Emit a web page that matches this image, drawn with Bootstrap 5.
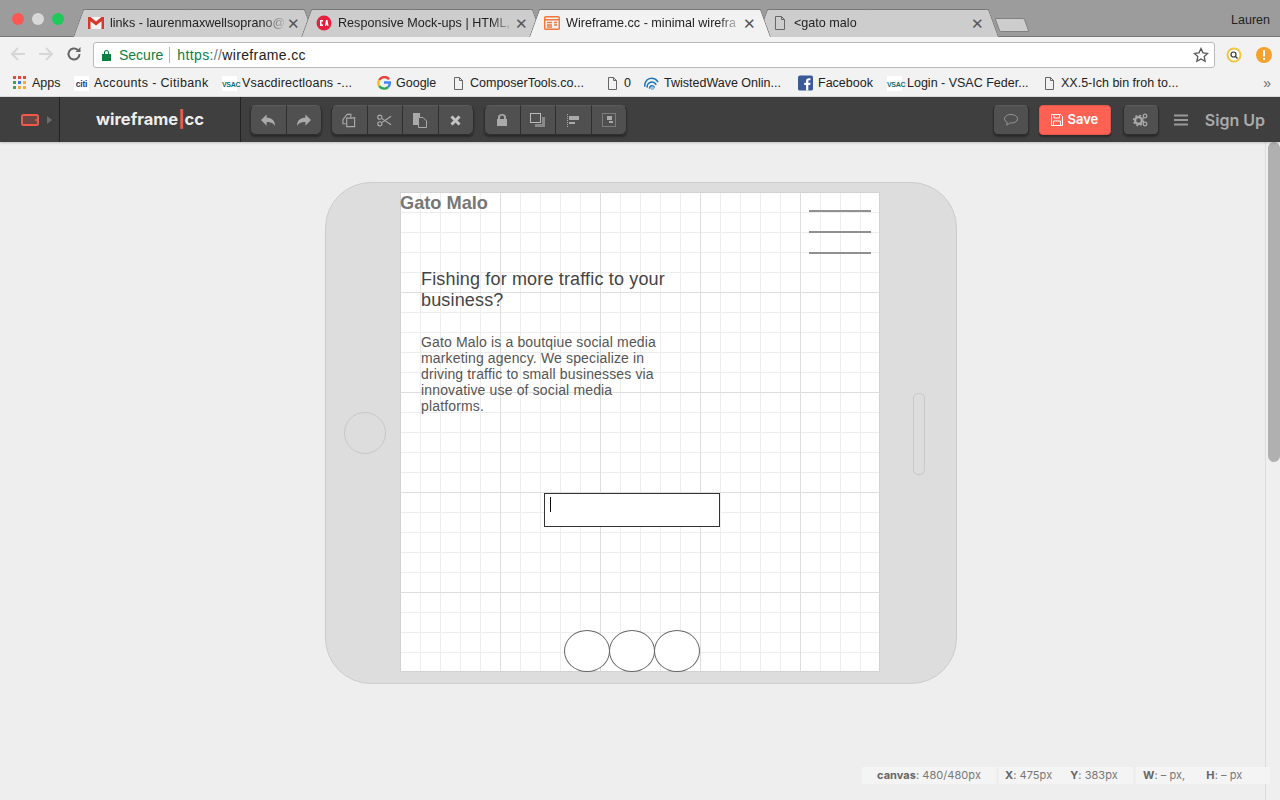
<!DOCTYPE html>
<html lang="en">
<head>
  <meta charset="UTF-8">
  <title>Wireframe.cc - minimal wireframing tool</title>
  <meta name="viewport" content="width=device-width, initial-scale=1.0">
  <link href="https://cdn.jsdelivr.net/npm/bootstrap@5.3.0/dist/css/bootstrap.min.css" rel="stylesheet">
  <style>
    html, body { height: 800px; overflow: hidden; }
    body { font-family: "Liberation Sans", Arial, sans-serif; background: #eee; color: #222; }

    /* browser chrome */
    .tabstrip { height: 37px; padding-left: 73px; background: #9c9c9c; border-bottom: 1px solid #777; }
    .lights { position: absolute; left: 12px; top: 13px; }
    .lights i { width: 12px; height: 12px; border-radius: 50%; display: block; }
    .light-red { background: #fc5753; }
    .light-off { background: #d8d8d8; }
    .light-green { background: #1fc95a; }
    .tab-item { position: relative; width: 241px; height: 28px; margin-right: -13px; margin-bottom: -1px; font-size: 12.6px; color: #222; padding: 0 15px 0 15px; }
    .tab-item::before, .tab-item::after { content: ""; position: absolute; top: 0; bottom: 0; background: #cdcdcd; border-top: 1px solid #777; z-index: 0; }
    .tab-item::before { left: 0; right: 50%; transform: skewX(-20deg); transform-origin: bottom left; border-left: 1px solid #777; border-radius: 2px 0 0 0; }
    .tab-item::after { right: 0; left: 50%; transform: skewX(20deg); transform-origin: bottom right; border-right: 1px solid #777; border-radius: 0 2px 0 0; }
    .tab-item > * { position: relative; z-index: 1; }
    .tab-on { z-index: 3; }
    .tab-on::before, .tab-on::after { background: #f2f2f2; }
    .tab-title { flex: 1; min-width: 0; margin-left: 6px; white-space: nowrap; -webkit-mask-image: linear-gradient(90deg, #000 86%, transparent); mask-image: linear-gradient(90deg, #000 86%, transparent); }
    .tab-x { width: 12px; flex: none; color: #555; font-size: 15px; line-height: 1; }
    .tab-new { width: 30px; height: 14px; margin-left: 12px; margin-bottom: 4px; background: #cdcdcd; border: 1px solid #808080; transform: skewX(20deg); border-radius: 2px; }
    .chrome-user { position: absolute; top: 11px; right: 10px; font-size: 12.5px; color: #222; }

    .addr-row { height: 32px; background: #f2f2f2; }
    .nav-ico { position: absolute; top: 9px; }
    .nav-back { left: 10px; }
    .nav-fwd { left: 38px; }
    .nav-reload { left: 66px; }
    .ext-ico { position: absolute; top: 10px; }
    .ext-search { left: 1226px; }
    .ext-alert { left: 1256px; }
    .addr-box { position: absolute; left: 93px; top: 5px; width: 1122px; height: 26px; background: #fff; border: 1px solid #bbb; border-radius: 3px; font-size: 14px; padding-left: 8px; padding-right: 5px; }
    .addr-secure { color: #0b8043; }
    .addr-sep { width: 1px; height: 16px; background: #bbb; margin: 0 7px 0 6px; }
    .addr-proto { color: #0b8043; }
    .addr-url { letter-spacing: .36px; }

    .bookmarks { height: 28px; background: #f2f2f2; border-bottom: 1px solid #ddd; font-size: 12.5px; color: #222; padding: 1px 0 0 13px; position: relative; }
    .bm { white-space: nowrap; gap: 5px; flex: none; }
    .bm-w1 { width: 61px; }
    .bm-w2 { width: 148px; letter-spacing: .36px; }
    .bm-w3 { width: 155px; letter-spacing: .2px; }
    .bm-w4 { width: 76px; }
    .bm-w5 { width: 154px; }
    .bm-w6 { width: 37px; }
    .bm-w7 { width: 154px; }
    .bm-w8 { width: 89px; }
    .bm-w9 { width: 157px; }
    .bm-citi { width: 15px; height: 15px; background: #fff; color: #1b3a7a; font-size: 8.5px; font-weight: 700; line-height: 17px; text-align: center; letter-spacing: -.2px; }
    .bm-vsac { width: 15px; height: 15px; background: #fff; color: #0d6b73; font-size: 7px; font-weight: 700; line-height: 17px; text-align: center; letter-spacing: -.3px; }
    .bm-more { position: absolute; right: 9px; top: 4px; color: #666; font-size: 14px; }

    /* app toolbar */
    .app-bar { height: 45px; background: #3f3f3f; box-shadow: 0 1px 2px rgba(0,0,0,.2); position: relative; z-index: 5; }
    .app-device { width: 60px; height: 45px; border-right: 1px solid #222; padding-left: 21px; }
    .app-logo { width: 181px; height: 45px; border-right: 1px solid #222; font-family: Inter, sans-serif; font-weight: 700; font-size: 16.5px; color: #eee; padding-left: 36px; }
    .app-logo b { color: #f05a4a; font-weight: 800; }
    .tool-group { margin-left: 9px; box-shadow: 0 2px 2px rgba(0,0,0,.35); border-radius: 5px; }
    .tool-btn { width: 36.5px; height: 30px; padding: 0; background: #505050; border: 1px solid #2f2f2f; border-top-color: #5a5a5a; color: #aaa; }
    .tool-last { margin-left: 10px; }
    .tool-solo { width: 36px; flex: none; border-radius: 5px; box-shadow: 0 2px 2px rgba(0,0,0,.35); }
    .btn-savecc { width: 72px; height: 30px; padding: 1px 0 0; flex: none; background: #ff6252; border: 1px solid #e8584a; color: #fff; border-radius: 4px; font-family: Inter, sans-serif; font-weight: 600; font-size: 13px; box-shadow: 0 2px 2px rgba(0,0,0,.35); margin: 0 12px 0 10px; }
    .signup-link { font-family: Inter, sans-serif; font-weight: 600; font-size: 16px; color: #aaa; margin: 0 15px 0 17px; }
    .burger-ico { display: block; margin-left: 15px; }

    /* work area */
    .work { height: 658px; position: relative; }
    .device-shell { position: absolute; left: 325px; top: 40px; width: 632px; height: 502px; background: #ddd; border: 1px solid #ccc; border-radius: 46px; }
    .device-home { position: absolute; left: 18px; top: 229px; width: 42px; height: 42px; border: 1px solid #c8c8c8; border-radius: 50%; }
    .device-side { position: absolute; left: 587px; top: 210px; width: 12px; height: 82px; border: 1px solid #c8c8c8; border-radius: 5px; }
    .wire-canvas { position: absolute; left: 74px; top: 9px; width: 480px; height: 480px; background-color: #fff; border: 1px solid #d2d2d2;
      background-image: linear-gradient(#dedede 1px, transparent 1px), linear-gradient(90deg, #dedede 1px, transparent 1px), linear-gradient(#ededed 1px, transparent 1px), linear-gradient(90deg, #ededed 1px, transparent 1px);
      background-size: 100px 100px, 100px 100px, 20px 20px, 20px 20px; background-position: -1px -1px; }
    .wire-brand { position: absolute; left: -1px; top: 0; font-weight: 700; font-size: 18.2px; line-height: 20px; color: #777; }
    .wire-line { position: absolute; left: 408px; width: 62px; height: 2px; background: #909090; }
    .wire-l1 { top: 17px; }
    .wire-l2 { top: 38px; }
    .wire-l3 { top: 59px; }
    .wire-head { position: absolute; left: 20px; top: 76px; width: 265px; font-size: 18px; line-height: 21px; color: #444; margin: 0; font-weight: 400; letter-spacing: .16px; }
    .wire-body { position: absolute; left: 20px; top: 141px; width: 250px; font-size: 14px; line-height: 16px; color: #555; letter-spacing: .15px; margin: 0; }
    .wire-input { position: absolute; left: 143px; top: 300px; width: 176px; height: 34px; border: 1px solid #333; background: #fff; }
    .wire-caret { position: absolute; left: 5px; top: 3px; width: 1px; height: 15px; background: #111; }
    .wire-dot { position: absolute; top: 437px; width: 46px; height: 42px; border: 1px solid #666; border-radius: 50%; background: #fff; }
    .wire-d1 { left: 163px; }
    .wire-d2 { left: 208px; }
    .wire-d3 { left: 253px; }

    .scroll-rail { position: absolute; right: 0; top: 0; bottom: 0; width: 15px; background: #efefef; border-left: 1px solid #ddd; }
    .scroll-thumb { position: absolute; left: 2px; top: 0; width: 12px; height: 320px; background: #b0b0b0; border-radius: 6px; }

    .status-bar { position: absolute; left: 862px; top: 625px; gap: 3px; font-family: Inter, sans-serif; font-size: 11px; color: #777; letter-spacing: .05px; }
    .status-cell { width: 134px; height: 17px; background: #f4f4f4; white-space: nowrap; }
    .status-a { padding-left: 15px; }
    .status-b { padding-left: 6px; gap: 18px; }
    .status-c { padding-left: 7px; gap: 21px; }
    .status-cell b { color: #666; }
  </style>
</head>
<body>
  <div class="tabstrip d-flex align-items-end position-relative">
    <div class="lights d-flex gap-2"><i class="light-red"></i><i class="light-off"></i><i class="light-green"></i></div>

    <div class="tab-item d-flex align-items-center">
      <svg width="16" height="12" viewBox="0 0 16 12"><rect width="16" height="12" fill="#f4f4f4"/><path d="M0 0h2.500L8 4.500 13.500 0H16v12h-2.500V4.200L8 8.500 2.500 4.200V12H0z" fill="#d5392c"/></svg>
      <span class="tab-title">links - laurenmaxwellsoprano@</span>
      <span class="tab-x">✕</span>
    </div>
    <div class="tab-item d-flex align-items-center">
      <svg width="16" height="16" viewBox="0 0 16 16"><circle cx="8" cy="8" r="7.500" fill="#e8203f"/><path d="M4 5h3v1.500H5.500v3H7V11H4zM9 11l1-6h1.500l1 6h-1.200l-.2-1.300H10.400l-.2 1.300z" fill="#fff"/></svg>
      <span class="tab-title">Responsive Mock-ups | HTML,</span>
      <span class="tab-x">✕</span>
    </div>
    <div class="tab-item tab-on d-flex align-items-center">
      <svg width="16" height="14" viewBox="0 0 16 14" fill="none" stroke="#f4773a" stroke-width="1.400"><rect x=".7" y=".7" width="14.600" height="12.600" rx="1"/><path d="M1 3.800h14M3 6.500h5M3 9h5M3 11h5M10 6.500h3M10 9h3"/></svg>
      <span class="tab-title">Wireframe.cc - minimal wirefra</span>
      <span class="tab-x">✕</span>
    </div>
    <div class="tab-item d-flex align-items-center">
      <svg width="16" height="14" viewBox="0 0 16 14" fill="none" stroke="#666"><path d="M3.500.5h6l3 3v10h-9zM9.500.5v3h3"/></svg>
      <span class="tab-title">&lt;gato malo</span>
      <span class="tab-x">✕</span>
    </div>
    <div class="tab-new"></div>
    <div class="chrome-user">Lauren</div>
  </div>

  <div class="addr-row position-relative">
    <svg class="nav-ico nav-back" width="16" height="16" viewBox="0 0 16 16" fill="none" stroke="#d6d6d6" stroke-width="2"><path d="M15 8H2M8 2 2 8l6 6"/></svg>
    <svg class="nav-ico nav-fwd" width="16" height="16" viewBox="0 0 16 16" fill="none" stroke="#d6d6d6" stroke-width="2"><path d="M1 8h13M8 2l6 6-6 6"/></svg>
    <svg class="nav-ico nav-reload" width="16" height="16" viewBox="0 0 16 16" fill="none" stroke="#666" stroke-width="2"><path d="M13.500 8a5.500 5.500 0 1 1-1.700-4"/><path d="M14.500 1v5h-5z" fill="#666" stroke="none"/></svg>
    <div class="addr-box d-flex align-items-center">
      <svg width="9" height="12" viewBox="0 0 9 12"><path d="M2 5V3.500a2.500 2.500 0 0 1 5 0V5h2v7H0V5zm1 0h3V3.500a1.500 1.500 0 0 0-3 0z" fill="#0b8043"/></svg>
      <span class="addr-secure ms-2">Secure</span><span class="addr-sep"></span>
      <span class="addr-url"><span class="addr-proto">https:</span><span class="text-secondary">//</span>wireframe.cc</span>
      <svg class="ms-auto" width="16" height="16" viewBox="0 0 16 16" fill="none" stroke="#555" stroke-width="1.300"><path d="m8 1.500 2 4.300 4.700.6-3.500 3.200.9 4.700L8 12l-4.100 2.300.9-4.700L1.300 6.400 6 5.800z"/></svg>
    </div>
    <svg class="ext-ico ext-search" width="16" height="16" viewBox="0 0 16 16"><circle cx="8" cy="8" r="6.500" fill="#fff" stroke="#f3c53c" stroke-width="2"/><circle cx="7.500" cy="7.500" r="2.500" fill="none" stroke="#333" stroke-width="1.200"/><path d="m9.500 9.500 2 2" stroke="#333" stroke-width="1.200"/></svg>
    <svg class="ext-ico ext-alert" width="16" height="16" viewBox="0 0 16 16"><circle cx="8" cy="8" r="8" fill="#f6a12d"/><path d="M7 3h2v6.500H7zM7 10.800h2V13H7z" fill="#fff"/></svg>
  </div>

  <div class="bookmarks d-flex align-items-center">
    <div class="bm d-flex align-items-center bm-w1"><svg width="14" height="14" viewBox="0 0 14 14"><rect width="3" height="3" fill="#e8453c"/><rect x="5" width="3" height="3" fill="#e8453c"/><rect x="10" width="3" height="3" fill="#e8453c"/><rect y="5" width="3" height="3" fill="#34a853"/><rect x="5" y="5" width="3" height="3" fill="#3b78e7"/><rect x="10" y="5" width="3" height="3" fill="#f4a93c"/><rect y="10" width="3" height="3" fill="#34a853"/><rect x="5" y="10" width="3" height="3" fill="#f4a93c"/><rect x="10" y="10" width="3" height="3" fill="#f4a93c"/></svg>Apps</div>
    <div class="bm d-flex align-items-center bm-w2"><span class="bm-citi">citi</span>Accounts - Citibank</div>
    <div class="bm d-flex align-items-center bm-w3"><span class="bm-vsac">VSAC</span>Vsacdirectloans -...</div>
    <div class="bm d-flex align-items-center bm-w4"><svg width="14" height="14" viewBox="0 0 14 14" fill="none" stroke-width="2.400"><path d="M12 3.200A6 6 0 0 0 2.200 4" stroke="#ea4335"/><path d="M2.200 4a6 6 0 0 0 0 6" stroke="#fbbc05"/><path d="M2.200 10a6 6 0 0 0 9 1" stroke="#34a853"/><path d="M11.200 11a6 6 0 0 0 1.600-4.500H7" stroke="#4285f4"/></svg>Google</div>
    <div class="bm d-flex align-items-center bm-w5"><svg width="12" height="13" viewBox="0 0 12 13" fill="none" stroke="#666"><path d="M1.500.5h5l3 3v9h-8zM6.500.5v3h3"/></svg>ComposerTools.co...</div>
    <div class="bm d-flex align-items-center bm-w6"><svg width="12" height="13" viewBox="0 0 12 13" fill="none" stroke="#666"><path d="M1.500.5h5l3 3v9h-8zM6.500.5v3h3"/></svg>0</div>
    <div class="bm d-flex align-items-center bm-w7"><svg width="15" height="16" viewBox="0 0 16 16" fill="none" stroke="#1a75bc" stroke-width="1.600"><path d="M1 12a7.500 7.500 0 0 1 14-5M3.500 13a5 5 0 0 1 9.500-3M6 14a2.500 2.500 0 0 1 5-1"/><circle cx="9" cy="13.500" r="2" fill="#8ec1e8" stroke="none"/></svg>TwistedWave Onlin...</div>
    <div class="bm d-flex align-items-center bm-w8"><svg width="15" height="16" viewBox="0 0 16 16"><rect width="16" height="16" rx="2" fill="#3b5998"/><path d="M11 16v-6h2l.3-2.400H11V6.200c0-.7.3-1.100 1.200-1.100h1.100V3c-.4 0-1-.1-1.700-.1-1.800 0-3 1.100-3 3v1.700h-2V10h2v6z" fill="#fff"/></svg>Facebook</div>
    <div class="bm d-flex align-items-center bm-w9"><span class="bm-vsac">VSAC</span>Login - VSAC Feder...</div>
    <div class="bm d-flex align-items-center"><svg width="12" height="13" viewBox="0 0 12 13" fill="none" stroke="#666"><path d="M1.500.5h5l3 3v9h-8zM6.500.5v3h3"/></svg>XX.5-Ich bin froh to...</div>
    <span class="bm-more">»</span>
  </div>

  <div class="app-bar d-flex align-items-center">
    <div class="app-device d-flex align-items-center gap-2">
      <svg width="18" height="12" viewBox="0 0 18 12"><rect x="1" y="1" width="16" height="10" rx="1.500" fill="none" stroke="#f0594a" stroke-width="2"/><rect x="2" y="2" width="14" height="8" fill="#6b4540"/><circle cx="15" cy="6" r="1" fill="#f0594a"/></svg>
      <svg width="5" height="8" viewBox="0 0 5 8"><path d="M0 0l5 4-5 4z" fill="#6b6b6b"/></svg>
    </div>
    <div class="app-logo d-flex align-items-center">wireframe<b>|</b>cc</div>

    <div class="btn-group tool-group">
      <button class="btn tool-btn"><svg width="15" height="13" viewBox="0 0 16 13"><path d="M6 0v3.500c5 0 9 2.500 9 9-1.500-3.500-4.500-4.500-9-4.500v4L0 6z" fill="#aaa"/></svg></button>
      <button class="btn tool-btn"><svg width="15" height="13" viewBox="0 0 16 13"><path d="M10 0v3.500c-5 0-9 2.500-9 9C2.500 9 5.500 8 10 8v4l6-6z" fill="#aaa"/></svg></button>
    </div>
    <div class="btn-group tool-group">
      <button class="btn tool-btn"><svg width="14" height="15" viewBox="0 0 15 15" fill="none" stroke="#aaa" stroke-width="1.200"><path d="M1 6.500 5.500 1h4v3.500M1 6.500V11h3"/><path d="M5 5h5l3.500-.5V14H5z"/></svg></button>
      <button class="btn tool-btn"><svg width="15" height="13" viewBox="0 0 16 13" fill="none" stroke="#aaa" stroke-width="1.200"><circle cx="3" cy="3" r="2.200"/><circle cx="3" cy="10" r="2.200"/><path d="M5 4.200 15 11M5 8.800 15 2"/></svg></button>
      <button class="btn tool-btn"><svg width="14" height="15" viewBox="0 0 14 15"><path d="M0 0h7v4H5v8H0z" fill="#aaa"/><path d="M5.500 4.500H10l3.500 3.500v6.500h-8z" fill="#505050" stroke="#aaa"/></svg></button>
      <button class="btn tool-btn"><svg width="11" height="11" viewBox="0 0 11 11"><path d="M1.500 1.500l8 8M9.500 1.500l-8 8" stroke="#c4c4c4" stroke-width="3"/></svg></button>
    </div>
    <div class="btn-group tool-group tool-last">
      <button class="btn tool-btn"><svg width="10" height="12" viewBox="0 0 10 12"><path d="M1 5V3.500a4 3.500 0 0 1 8 0V5h1v7H0V5zm2 0h4V3.500a2 2 0 0 0-4 0z" fill="#aaa"/></svg></button>
      <button class="btn tool-btn"><svg width="15" height="14" viewBox="0 0 15 14"><path d="M12 4h3v10H5v-3h7z" fill="#8a8a8a"/><rect x=".5" y=".5" width="10" height="9" fill="none" stroke="#bbb"/></svg></button>
      <button class="btn tool-btn"><svg width="12" height="13" viewBox="0 0 12 13"><path d="M.5 0v13" stroke="#aaa" stroke-dasharray="1 1"/><rect x="2" y="2" width="10" height="4" fill="#aaa"/><rect x="2" y="8" width="6" height="2" fill="#aaa"/></svg></button>
      <button class="btn tool-btn"><svg width="14" height="14" viewBox="0 0 14 14"><rect x=".5" y=".5" width="13" height="13" fill="none" stroke="#aaa" stroke-dasharray="1 1"/><rect x="5" y="3" width="5" height="4" fill="#aaa"/><rect x="7" y="8" width="4" height="2" fill="#aaa"/></svg></button>
    </div>

    <button class="btn tool-btn tool-solo ms-auto"><svg width="14" height="12" viewBox="0 0 14 12" fill="none" stroke="#999"><path d="M7 .5c3.500 0 6.500 1.800 6.500 4.300S10.500 9 7.500 9c-.7 0-1.200 0-1.800-.2C4.800 10 3.600 11 2.500 11c.5-.8.8-1.500.8-2.700C1.500 7.500.5 6.200.5 4.800.5 2.300 3.500.5 7 .5z"/></svg></button>
    <button class="btn btn-savecc d-flex align-items-center justify-content-center gap-1">
      <svg width="12" height="12" viewBox="0 0 12 12" fill="none" stroke="#fff"><path d="M.5.5h9l2 2v9H.5z"/><path d="M3 .5V4h5.500V.5M2.500 11.500V7h7v4.500"/></svg>Save
    </button>
    <button class="btn tool-btn tool-solo"><svg width="15" height="14" viewBox="0 0 15 14"><circle cx="5.500" cy="7.500" r="3.400" fill="none" stroke="#aaa" stroke-width="2.200"/><circle cx="5.500" cy="7.500" r="5" fill="none" stroke="#aaa" stroke-width="1.400" stroke-dasharray="2 1.930"/><circle cx="12" cy="3" r="1.800" fill="none" stroke="#aaa" stroke-width="1.300"/><circle cx="12" cy="11" r="1.800" fill="none" stroke="#aaa" stroke-width="1.300"/></svg></button>
    <svg class="burger-ico" width="14" height="12" viewBox="0 0 14 12"><path d="M0 1.500h14M0 6h14M0 10.500h14" stroke="#999" stroke-width="1.800"/></svg>
    <span class="signup-link">Sign Up</span>
  </div>

  <div class="work">
    <div class="device-shell">
      <div class="device-home"></div>
      <div class="device-side"></div>
      <div class="wire-canvas">
        <div class="wire-brand">Gato Malo</div>
        <div class="wire-line wire-l1"></div>
        <div class="wire-line wire-l2"></div>
        <div class="wire-line wire-l3"></div>
        <h5 class="wire-head">Fishing for more traffic to your business?</h5>
        <p class="wire-body">Gato Malo is a boutqiue social media marketing agency. We specialize in driving traffic to small businesses via innovative use of social media platforms.</p>
        <div class="wire-input"><span class="wire-caret"></span></div>
        <div class="wire-dot wire-d1"></div>
        <div class="wire-dot wire-d2"></div>
        <div class="wire-dot wire-d3"></div>
      </div>
    </div>

    <div class="scroll-rail"><div class="scroll-thumb"></div></div>

    <div class="status-bar d-flex">
      <div class="status-cell status-a d-flex align-items-center"><span><b>canvas</b>: 480/480px</span></div>
      <div class="status-cell status-b d-flex align-items-center"><span><b>X</b>: 475px</span><span><b>Y</b>: 383px</span></div>
      <div class="status-cell status-c d-flex align-items-center"><span><b>W</b>: – px,</span><span><b>H</b>: – px</span></div>
    </div>
  </div>

  <script src="https://cdn.jsdelivr.net/npm/bootstrap@5.3.0/dist/js/bootstrap.bundle.min.js"></script>
</body>
</html>
